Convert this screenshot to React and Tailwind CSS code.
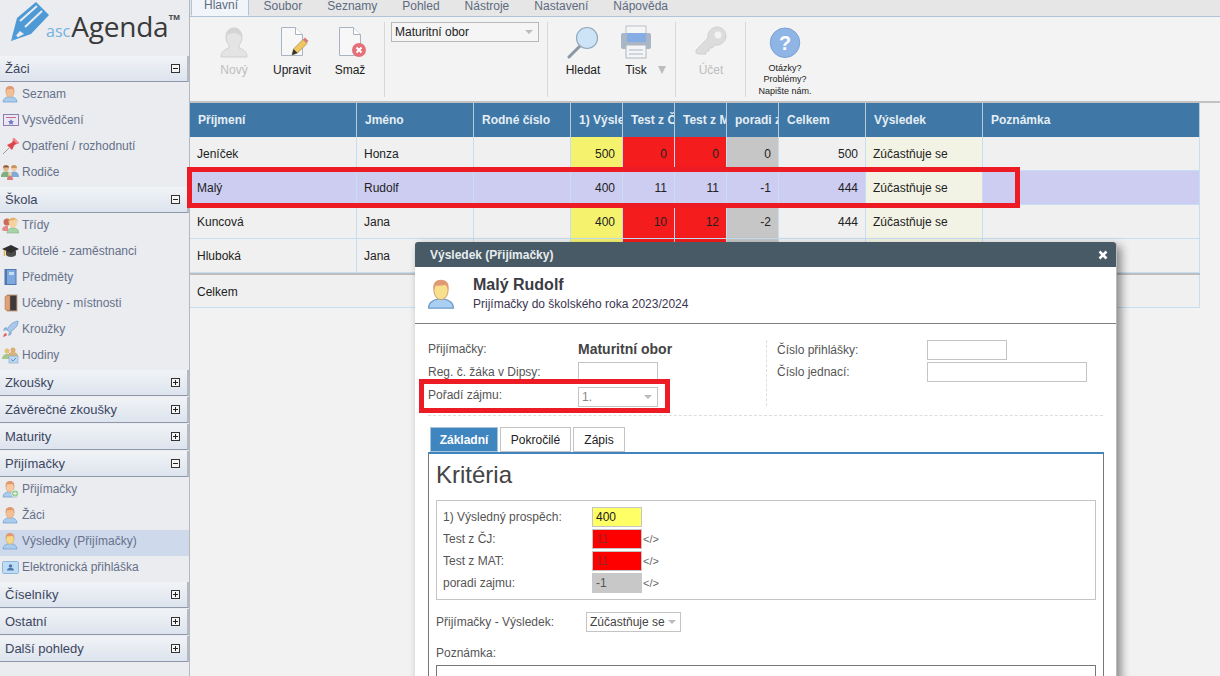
import React from 'react';

const Person = ({ hair = '#e0986f', face = '#f6c9a0', body = '#a9cdef', line = '#6f9cc9', size = 18, children }) => (
  <svg width={size} height={size} viewBox="0 0 18 18" className="shrink-0">
    <path d="M2 17c0-3.500 3-4.800 5.500-5.300h3c2.500.5 5.500 1.800 5.500 5.300z" fill={body} stroke={line} strokeWidth=".7" />
    <ellipse cx="9" cy="7" rx="4" ry="5.200" fill={face} stroke="#c9966c" strokeWidth=".5" />
    <path d="M4.800 7C4 2.500 6.500 1 9 1s5 1.500 4.200 6c-.4-2-1.500-3-2-3.200-1.500.6-4 .6-5 .4-.6.6-1.100 1.500-1.400 2.800z" fill={hair} />
    {children}
  </svg>
);

const Parents = () => (
  <svg width="18" height="18" viewBox="0 0 18 18" className="shrink-0">
    <circle cx="5" cy="5" r="3" fill="#e8b48a" />
    <path d="M2 4.500C2 1.500 8 1.500 8 4.500z" fill="#8a5a3a" />
    <path d="M0 14c0-4 2-5.500 5-5.500S9 10 9 14z" fill="#7fae7f" />
    <circle cx="13" cy="5" r="3" fill="#f1c9a3" />
    <path d="M10 5c0-4 6-4 6 0z" fill="#c9955f" />
    <path d="M9 14c0-4 1.500-5.500 4-5.500s5 1.500 5 5.500z" fill="#7fa9d6" />
    <circle cx="9" cy="11" r="2" fill="#f1c9a3" />
    <path d="M6 17c0-3 1-4 3-4s3 1 3 4z" fill="#d97b7b" />
  </svg>
);

const Certificate = () => (
  <svg width="18" height="18" viewBox="0 0 18 18" className="shrink-0">
    <rect x="2.500" y="3.500" width="15" height="11" fill="#ece7f4" stroke="#8c7fb0" />
    <path d="M5 6.500h10" stroke="#c46a8a" />
    <path d="M10 8l1 2 2 .3-1.500 1.400.4 2-1.900-.9-1.900.9.400-2L7 10.300 9 10z" fill="#6f78c9" />
  </svg>
);

const Pin = () => (
  <svg width="18" height="18" viewBox="0 0 18 18" className="shrink-0">
    <path d="M2 17l6-6" stroke="#9a9a9a" />
    <path d="M6 8l5-2.500L13 1l5 5-4.500 2L11 13z" fill="#e0474c" />
    <path d="M13 1l5 5-2 1-5-5z" fill="#f08a8d" />
  </svg>
);

const Classes = () => (
  <svg width="18" height="18" viewBox="0 0 18 18" className="shrink-0">
    <circle cx="6" cy="6" r="3.500" fill="#c96d5a" />
    <path d="M1 14c0-3 3-4.500 6-4.500V15H3z" fill="#e88a8a" />
    <ellipse cx="12" cy="7" rx="4" ry="5" fill="#f6d29f" />
    <path d="M7 7c0-7 10-7 10 0-1-3-2-3-3-3.500-1 1-4 1-5 1z" fill="#e5b06e" />
    <path d="M6 17c0-3.500 3-5 6-5s6 1.500 6 5z" fill="#a7d3a7" stroke="#78a878" strokeWidth=".5" />
  </svg>
);

const Cap = () => (
  <svg width="18" height="18" viewBox="0 0 18 18" className="shrink-0">
    <path d="M5 9v4c2 2.500 8 2.500 10 0V9z" fill="#4b4b4b" />
    <path d="M1 7l9-4 8 4-8 4z" fill="#2f2f2f" />
    <path d="M3.500 8v6" stroke="#e8b23a" strokeWidth="1.400" />
  </svg>
);

const Book = () => (
  <svg width="18" height="18" viewBox="0 0 18 18" className="shrink-0">
    <rect x="4" y="1.500" width="11" height="15" fill="#7fa9dc" stroke="#4d79b0" />
    <rect x="4" y="1.500" width="2" height="15" fill="#4d79b0" />
    <rect x="8" y="4" width="5" height="3" fill="#c9dcf2" />
  </svg>
);

const Door = () => (
  <svg width="18" height="18" viewBox="0 0 18 18" className="shrink-0">
    <rect x="6" y="1" width="10" height="16" fill="#3f3a38" stroke="#c9a58a" />
    <path d="M4 2.500l5-1.500v16l-5-1.500z" fill="#e0a07a" stroke="#a8714f" strokeWidth=".5" />
  </svg>
);

const Rocket = () => (
  <svg width="18" height="18" viewBox="0 0 18 18" className="shrink-0">
    <path d="M6 10C8 5 12 2 17 1c0 5-3 8-8 11z" fill="#a9c8ec" stroke="#6f96c9" strokeWidth=".7" />
    <path d="M6 7L3 8l-1 3 4-1zM11 12l-1 3-3 1 1-4z" fill="#8fb2dc" />
    <path d="M2 17l1-3 2-1 1 2-1 1z" fill="#e0655f" />
  </svg>
);

const Hours = () => (
  <svg width="18" height="18" viewBox="0 0 18 18" className="shrink-0">
    <circle cx="6" cy="5" r="2.500" fill="#e5c07a" />
    <circle cx="12" cy="4" r="2.500" fill="#dcae74" />
    <path d="M1 13c0-3 2-5 5-5s5 2 5 5z" fill="#a7c78d" />
    <path d="M7 10c0-3 2-4 5-4s5 2 5 4z" fill="#d8b37a" />
    <rect x="8" y="10" width="9" height="7" fill="#bcd8f0" stroke="#7fa9d0" strokeWidth=".6" />
    <path d="M10 13.500l2 1.500 3-3" stroke="#5d8fc0" fill="none" />
  </svg>
);

const Prihlaska = () => (
  <svg width="18" height="18" viewBox="0 0 18 18" className="shrink-0">
    <rect x="1.500" y="3.500" width="16" height="12" rx="1" fill="#bfdcf5" stroke="#8fb7da" />
    <circle cx="9.500" cy="8" r="1.800" fill="#4d79b0" />
    <path d="M6 12.500c0-2 1.500-2.500 3.500-2.500s3.500.5 3.500 2.500z" fill="#4d79b0" />
  </svg>
);

const items = {
  zaci: [
    ['Seznam', <Person body="#a9cdef" face="#f3bf94" hair="#dd9a74" />],
    ['Vysvědčení', <Certificate />],
    ['Opatření / rozhodnutí', <Pin />],
    ['Rodiče', <Parents />],
  ],
  skola: [
    ['Třídy', <Classes />],
    ['Učitelé - zaměstnanci', <Cap />],
    ['Předměty', <Book />],
    ['Učebny - místnosti', <Door />],
    ['Kroužky', <Rocket />],
    ['Hodiny', <Hours />],
  ],
  prijimacky: [
    ['Přijímačky', <Person><circle cx="14" cy="13.500" r="3.500" fill="#8fc98f" stroke="#fff" strokeWidth=".6" /><path d="M14 11.500v4M12 13.500h4" stroke="#fff" strokeWidth=".8" /></Person>],
    ['Žáci', <Person face="#f3bf94" />],
    ['Výsledky (Přijímačky)', <Person face="#f5d987" />, true],
    ['Elektronická přihláška', <Prihlaska />],
  ],
};

const SectionHeader = ({ title, open }) => (
  <div className="h-[26px] flex items-center justify-between pl-[5px] pr-[7px] bg-gradient-to-b from-[#f1f3f6] to-[#dde4ee] border-b border-r-2 border-[#8e98aa] border-r-[#b3bac6] text-[13px] text-[#3c4660]">
    <span>{title}</span>
    <span className="w-[9px] h-[9px] border border-[#333] bg-[#f5f5f5] relative shrink-0 flex items-center justify-center">
      <span className="w-[5px] h-px bg-[#222]" />
      {!open && <span className="absolute w-px h-[5px] bg-[#222]" />}
    </span>
  </div>
);

const MenuItems = ({ list }) => (
  <div className="mt-px">
    {list.map(([label, icon, active]) => (
      <div key={label} className={`h-[26px] pb-[4px] flex items-center gap-[3px] pl-px text-[12px] text-[#66708a] ${active ? 'bg-[#cfd9ec]' : ''}`}>
        {icon}
        <span>{label}</span>
      </div>
    ))}
  </div>
);

const Sidebar = () => (
  <div className="w-[190px] shrink-0 h-full bg-[#eaecef] border-r border-[#b4b8be]">
    <div className="h-[56px] relative flex items-start">
      <svg width="52" height="44" viewBox="0 0 52 44" className="ml-[8px] mt-[1px] shrink-0">
        <path d="M3 40L9 17 28 1l13 13-18 19z" fill="#4d9ad6" />
        <path d="M12 20L29 5M17 26L34 10" stroke="#eaecef" strokeWidth="2" />
        <path d="M3 40l9-10 4 3z" fill="#eaecef" />
        <path d="M3 40l5-6 2 3z" fill="#4d9ad6" />
      </svg>
      <span className="mt-[21px] ml-[-14px] text-[16px] leading-[20px] text-[#76b2de] font-['Open_Sans',sans-serif]">asc</span>
      <span className="mt-[8px] ml-px text-[28px] leading-[36px] tracking-[-0.2px] text-[#3a3a3a] font-['Open_Sans',sans-serif]">Agenda</span>
      <span className="mt-[14px] text-[8px] leading-[8px] font-bold text-[#444]">TM</span>
    </div>
    <SectionHeader title="Žáci" open />
    <MenuItems list={items.zaci} />
    <SectionHeader title="Škola" open />
    <MenuItems list={items.skola} />
    <div className="flex flex-col gap-px">
      <SectionHeader title="Zkoušky" />
      <SectionHeader title="Závěrečné zkoušky" />
      <SectionHeader title="Maturity" />
    </div>
    <div className="mt-px">
      <SectionHeader title="Přijímačky" open />
    </div>
    <MenuItems list={items.prijimacky} />
    <div className="flex flex-col gap-px">
      <SectionHeader title="Číselníky" />
      <SectionHeader title="Ostatní" />
      <SectionHeader title="Další pohledy" />
    </div>
  </div>
);

const tabs = ['Soubor', 'Seznamy', 'Pohled', 'Nástroje', 'Nastavení', 'Nápověda'];

const TabBar = () => (
  <div className="h-[17px] bg-[#e6e6e6] border-b border-[#b1c3d8] flex items-end text-[12px] text-[#5d6b80]">
    <div className="ml-px w-[58px] h-[17px] bg-[#f1f5f9] border-x border-b border-x-[#b1c3d8] border-b-[#f1f5f9] pl-[12px] overflow-hidden leading-[12px]">
      Hlavní
    </div>
    <div className="h-full flex ml-[2px] leading-[12px]">
      {tabs.map((t) => (
        <div key={t} className="px-[12.500px] h-[16px] overflow-hidden">{t}</div>
      ))}
    </div>
  </div>
);

const RibbonBtn = ({ icon, label, disabled, width = 'w-[58px]' }) => (
  <div className={`${width} shrink-0 flex flex-col items-center text-[12px] ${disabled ? 'text-[#bdbdbd]' : 'text-[#222]'}`}>
    <div className="h-[36px] mt-[2px] flex items-center justify-center">{icon}</div>
    <div className="leading-[14px] mt-[3px]">{label}</div>
  </div>
);

const DocIcon = ({ children }) => (
  <svg width="34" height="34" viewBox="0 0 34 34">
    <path d="M6.500 2.500h14l7 7v21h-21z" fill="#f7f7f7" stroke="#a9b4c2" />
    <path d="M20.500 2.500v7h7" fill="#fff" stroke="#a9b4c2" />
    {children}
  </svg>
);

const Ribbon = () => (
  <div className="h-[86px] bg-[#f3f3f3] border-b-2 border-[#c2c2c2] flex items-stretch pb-[4px] pt-[5px]">
    <div className="w-[195px] border-r border-[#d8d8d8] pl-[15px] flex mt-0">
      <RibbonBtn disabled label="Nový" icon={
        <svg width="28" height="32" viewBox="0 0 28 32">
          <path d="M1 31c0-6 5-8 8-9v-3c-2-2-3-5-3-8 0-6 4-9 8-9s8 3 8 9c0 3-1 6-3 8v3c3 1 8 3 8 9z" fill="#e4e4e4" stroke="#cfcfcf" />
          <path d="M6 11c0-6 4-9 8-9s8 3 8 9c-3-3-5-4-8-4s-6 1-8 4z" fill="#d4d4d4" />
        </svg>} />
      <RibbonBtn label="Upravit" icon={
        <DocIcon>
          <path d="M17 30l1.500-6L28 14.500l4 4L22.500 28z" fill="#f0c75e" stroke="#8a7a4a" strokeWidth=".6" />
          <path d="M28 14.500l2-2 3.500 3.500-2 2z" fill="#d87a7a" />
          <path d="M17 30l1.500-6 4 4z" fill="#333" />
        </DocIcon>} />
      <RibbonBtn label="Smaž" icon={
        <DocIcon>
          <circle cx="26" cy="25" r="7" fill="#e4707a" />
          <path d="M23.500 22.500l5 5M28.500 22.500l-5 5" stroke="#fff" strokeWidth="2" />
        </DocIcon>} />
    </div>
    <div className="w-[163px] border-r border-[#d8d8d8] pl-[6px]">
      <div className="w-[148px] h-[20px] border border-[#b8b8b8] bg-[#f5f5f5] flex items-center justify-between pl-[3px] pr-[5px] text-[12px] text-[#222]">
        <span>Maturitní obor</span>
        <span className="w-0 h-0 border-x-[4px] border-x-transparent border-t-[4px] border-t-[#bbb]" />
      </div>
    </div>
    <div className="w-[128px] border-r border-[#d8d8d8] flex">
      <RibbonBtn width="w-[70px]" label="Hledat" icon={
        <svg width="34" height="34" viewBox="0 0 34 34">
          <path d="M3 32l12-12" stroke="#8a97a5" strokeWidth="3" strokeLinecap="round" />
          <circle cx="21" cy="13" r="10.500" fill="#cde4f6" stroke="#93a9bd" strokeWidth="1.200" />
        </svg>} />
      <RibbonBtn width="w-[36px]" label="Tisk" icon={
        <svg width="32" height="34" viewBox="0 0 32 34">
          <rect x="6" y="1" width="20" height="14" fill="#f5f5f5" stroke="#b9c0c8" />
          <rect x="1" y="8" width="30" height="16" rx="2" fill="#a9b6c6" />
          <path d="M7 8h19v8q0 1-1 1H8q-1 0-1-1z" fill="#85ade3" />
          <rect x="6" y="20" width="20" height="13" fill="#f5f5f5" stroke="#b0b8c2" />
          <path d="M9 25h14M9 29h14" stroke="#a9b6c6" />
        </svg>} />
      <span className="mt-[44px] ml-[4px] w-0 h-0 border-x-[4px] border-x-transparent border-t-[8px] border-t-[#bdbdbd]" />
    </div>
    <div className="w-[70px] border-r border-[#d8d8d8] flex">
      <RibbonBtn width="w-[70px]" disabled label="Účet" icon={
        <svg width="32" height="32" viewBox="0 0 32 32">
          <path d="M1 24l12-12c-1-6 4-11 9-11s9 4 9 9-5 10-11 9l-3 3h-3v3h-3v3H4l-3-1z" fill="#dcdcdc" stroke="#d0d0d0" />
          <circle cx="23" cy="9" r="3.500" fill="#f3f3f3" />
        </svg>} />
    </div>
    <div className="w-[78px] flex flex-col items-center text-[9px] leading-[11.500px] text-[#222] text-center">
      <svg width="32" height="32" viewBox="0 0 32 32" className="mt-[5px] mb-[4px]">
        <circle cx="16" cy="16" r="15" fill="#8fb4e6" stroke="#7a9fd0" />
        <text x="16" y="23" textAnchor="middle" fontSize="20" fontWeight="bold" fill="#fff" fontFamily="Liberation Sans, sans-serif">?</text>
      </svg>
      <div>Otázky?</div>
      <div>Problémy?</div>
      <div>Napište nám.</div>
    </div>
  </div>
);

const GRID = 'grid grid-cols-[167px_117px_97px_52px_52px_52px_52px_87px_117px_217px]';

const headers = ['Příjmení', 'Jméno', 'Rodné číslo', '1) Výsledný', 'Test z ČJ', 'Test z MAT', 'poradi zajmu', 'Celkem', 'Výsledek', 'Poznámka'];

const Cell = ({ children, color = 'bg-[#f0f0f0]', right }) => (
  <div className={`${color} border-r border-b border-[#c5def2] h-[34px] flex items-center overflow-hidden whitespace-nowrap px-[7px] text-[12px] text-[#222] ${right ? 'justify-end' : ''}`}>
    {children}
  </div>
);

const Row = ({ name, first, vals, selected }) => {
  const y = selected ? 'bg-[#cdcdf2]' : 'bg-[#f5f36e]';
  const r = selected ? 'bg-[#cdcdf2]' : 'bg-[#f41c1c]';
  const g = selected ? 'bg-[#cdcdf2]' : 'bg-[#c6c6c6]';
  const c = selected ? 'bg-[#cdcdf2]' : 'bg-[#f0f0f0]';
  return (
    <div className={GRID}>
      <Cell color={c}>{name}</Cell>
      <Cell color={c}>{first}</Cell>
      <Cell color={c} />
      <Cell color={y} right>{vals[0]}</Cell>
      <Cell color={r} right>{vals[1]}</Cell>
      <Cell color={r} right>{vals[2]}</Cell>
      <Cell color={g} right>{vals[3]}</Cell>
      <Cell color={c} right>{vals[4]}</Cell>
      <Cell color="bg-[#f2f3e4]">{vals[5]}</Cell>
      <Cell color={c} />
    </div>
  );
};

const Grid = () => (
  <div className="w-[1010px]">
    <div className={`${GRID} h-[34px] bg-[#3f78a6]`}>
      {headers.map((h) => (
        <div key={h} className="border-r border-[#b9cbd9] flex items-center overflow-hidden whitespace-nowrap pl-[8px] text-[12px] font-bold text-[#e6eef5]">{h}</div>
      ))}
    </div>
    <Row name="Jeníček" first="Honza" vals={['500', '0', '0', '0', '500', 'Zúčastňuje se']} />
    <Row name="Malý" first="Rudolf" selected vals={['400', '11', '11', '-1', '444', 'Zúčastňuje se']} />
    <Row name="Kuncová" first="Jana" vals={['400', '10', '12', '-2', '444', 'Zúčastňuje se']} />
    <Row name="Hluboká" first="Jana" vals={['', '', '', '', '', '']} />
    <div className="h-[2px] bg-[#bdbdbd]" />
    <div className="h-[33px] bg-[#f0f0f0] border-r border-b border-[#c5def2] flex items-center pl-[7px] pt-[2px] text-[12px] text-[#222]">Celkem</div>
  </div>
);

const Field = ({ label, children, labelClass = '' }) => (
  <div className="flex items-center">
    <span className={`w-[150px] shrink-0 text-[12px] text-[#555] ${labelClass}`}>{label}</span>
    {children}
  </div>
);

const Kriterium = ({ label, value, color, code }) => (
  <div className="flex items-center h-[22px]">
    <span className="w-[155px] shrink-0 text-[12px] text-[#555] pl-[6px]">{label}</span>
    <span className={`w-[50px] h-[20px] border border-[#c4c4c4] ${color} flex items-center pl-[3px] text-[12px]`}>{value}</span>
    {code && <span className="ml-px text-[11px] text-[#666]">&lt;/&gt;</span>}
  </div>
);

const Modal = () => (
  <div className="absolute left-[415px] top-[242px] w-[702px] h-[440px] bg-white rounded-t-[3px] shadow-[4px_4px_10px_rgba(0,0,0,0.45)] border-r border-[#bbb]">
    <div className="h-[25px] bg-[#475a65] rounded-t-[3px] flex items-center justify-between pl-[15px] pr-[8px] text-[12px] font-bold text-[#e8edf0]">
      <span>Výsledek (Přijímačky)</span>
      <svg width="10" height="10" viewBox="0 0 10 10">
        <path d="M1.500 1.500l7 7M8.500 1.500l-7 7" stroke="#fff" strokeWidth="2.600" />
      </svg>
    </div>
    <div className="h-[57px] border-b border-[#808080] flex items-start pl-[10px] pt-[8px]">
      <div className="mt-[3px]">
        <Person size={32} face="#f8df8c" hair="#df9a74" body="#a9d0f2" />
      </div>
      <div className="ml-[16px]">
        <div className="text-[16px] font-bold leading-[20px] text-[#3b3b44]">Malý Rudolf</div>
        <div className="text-[12px] leading-[16px] mt-px text-[#3c3550]">Prijímačky do školského roka 2023/2024</div>
      </div>
    </div>
    <div className="mx-[13px] h-[92px] border-b border-dashed border-[#ddd] flex pt-[16px]">
      <div className="w-[339px] h-[66px] border-r border-dashed border-[#ddd]">
        <div className="flex flex-col gap-[4px]">
          <Field label="Přijímačky:"><span className="text-[14px] font-bold leading-[18px] text-[#444]">Maturitní obor</span></Field>
          <Field label="Reg. č. žáka v Dipsy:"><span className="w-[80px] h-[19px] border border-[#c4c4c4]" /></Field>
          <div className="mt-px">
            <Field label="Pořadí zájmu:" labelClass="pb-[4px]">
              <span className="w-[80px] h-[20px] border border-[#c4c4c4] flex items-center justify-between pl-[3px] pr-[5px] text-[12px] text-[#888]">
                1.
                <span className="w-0 h-0 border-x-[4px] border-x-transparent border-t-[4px] border-t-[#bbb]" />
              </span>
            </Field>
          </div>
        </div>
      </div>
      <div className="pl-[10px] flex flex-col gap-[2px]">
        <Field label="Číslo přihlášky:"><span className="w-[80px] h-[20px] border border-[#c4c4c4]" /></Field>
        <Field label="Číslo jednací:"><span className="w-[160px] h-[20px] border border-[#c4c4c4]" /></Field>
      </div>
    </div>
    <div className="mx-[13px] mt-[11px] w-[676px]">
      <div className="flex gap-[2px] pl-[2px] h-[25px] text-[12px]">
        <div className="w-[68px] bg-[#3f85c0] border border-[#a9c3da] text-white font-bold flex items-center justify-center">Základní</div>
        <div className="w-[71px] border border-[#c4c4c4] text-[#222] flex items-center justify-center">Pokročilé</div>
        <div className="w-[52px] border border-[#c4c4c4] text-[#222] flex items-center justify-center">Zápis</div>
      </div>
      <div className="border-t-2 border-t-[#3f85c0] border-x border-x-[#777] h-[230px] px-[7px]">
        <div className="text-[24px] leading-[28px] mt-[7px] text-[#444]">Kritéria</div>
        <div className="mt-[11px] border border-[#c4c4c4] h-[100px] w-[660px] pt-[5px]">
          <Kriterium label="1) Výsledný prospěch:" value="400" color="bg-[#ffff66] text-[#222]" />
          <Kriterium label="Test z ČJ:" value="11" color="bg-[#ff0000] text-[#a02020]" code />
          <Kriterium label="Test z MAT:" value="11" color="bg-[#ff0000] text-[#a02020]" code />
          <Kriterium label="poradi zajmu:" value="-1" color="bg-[#c8c8c8] text-[#555] border-[#c8c8c8]" code />
        </div>
        <div className="flex items-center mt-[12px]">
          <span className="w-[150px] shrink-0 text-[12px] text-[#555]">Přijímačky - Výsledek:</span>
          <span className="w-[95px] h-[20px] border border-[#c4c4c4] flex items-center justify-between pl-[3px] pr-[4px] text-[12px] text-[#444]">
            Zúčastňuje se
            <span className="w-0 h-0 border-x-[4px] border-x-transparent border-t-[4px] border-t-[#bbb]" />
          </span>
        </div>
        <div className="mt-[14px] text-[12px] leading-[14px] text-[#555]">Poznámka:</div>
        <div className="mt-[5px] h-[40px] w-[660px] border border-[#777]" />
      </div>
    </div>
  </div>
);

export default function App() {
  return (
    <div className="relative w-[1220px] h-[676px] overflow-hidden flex bg-[#f2f2f2] font-['Liberation_Sans',Arial,sans-serif]">
      <Sidebar />
      <div className="flex-1 flex flex-col min-w-0">
        <TabBar />
        <Ribbon />
        <Grid />
      </div>
      <Modal />
      <div className="absolute left-[187px] top-[167px] w-[833px] h-[41px] border-[5px] border-[#ed1c24]" />
      <div className="absolute left-[419px] top-[379px] w-[251px] h-[34px] border-[5px] border-[#ed1c24]" />
    </div>
  );
}
